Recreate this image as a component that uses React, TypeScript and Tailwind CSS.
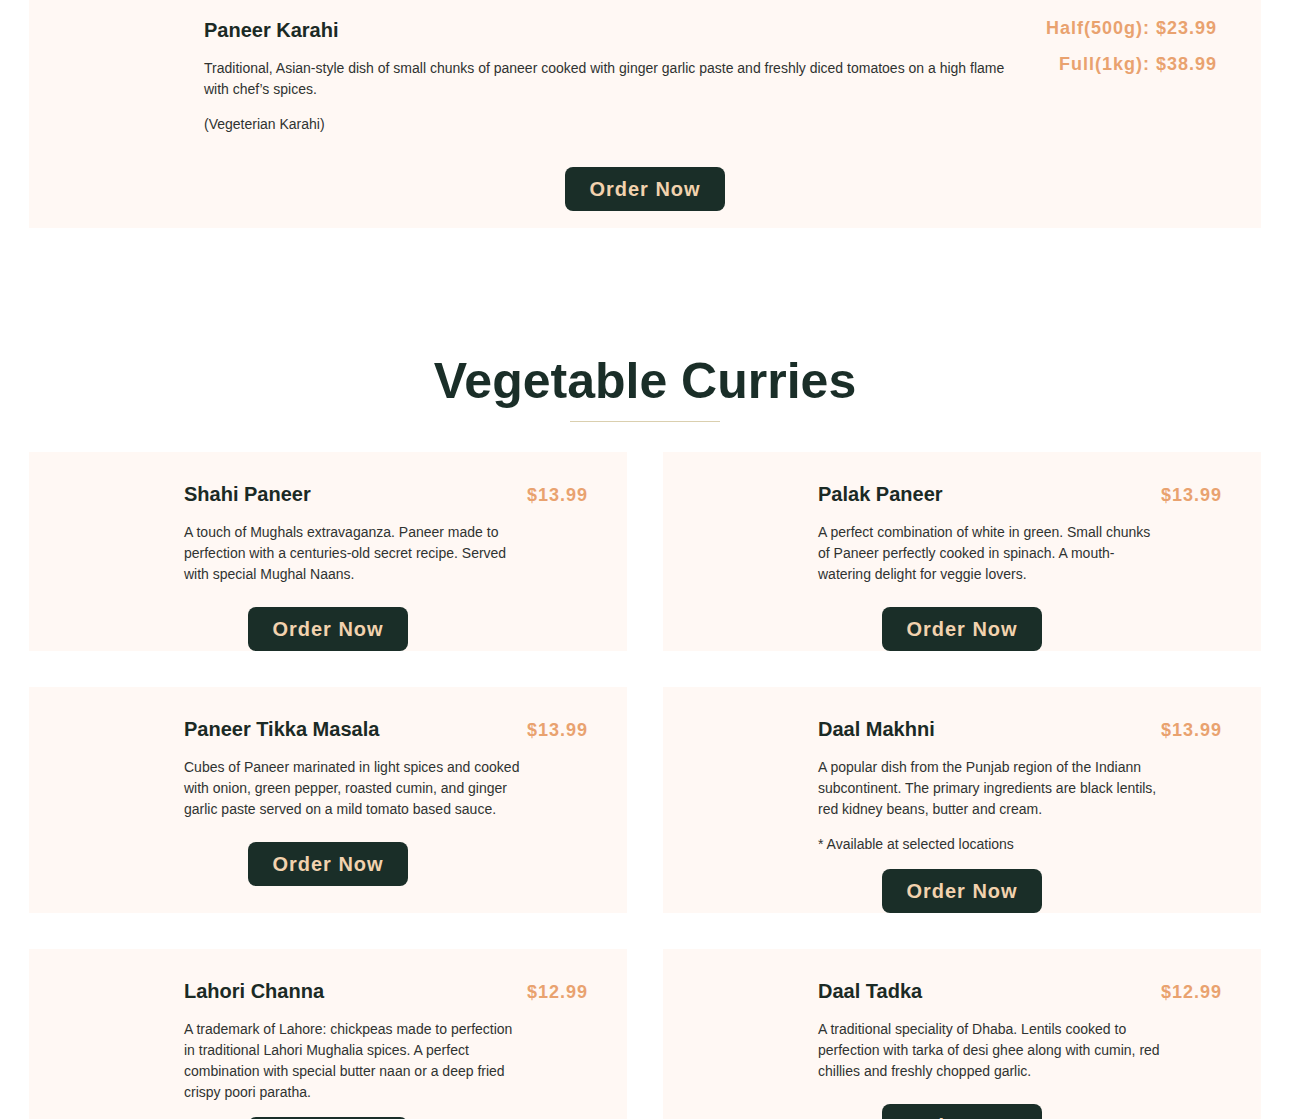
import React from "react";

type Item = { name: string; price: string; desc: string[] };

const items: Item[] = [
  {
    name: "Shahi Paneer",
    price: "$13.99",
    desc: [
      "A touch of Mughals extravaganza. Paneer made to perfection with a centuries-old secret recipe. Served with special Mughal Naans.",
    ],
  },
  {
    name: "Palak Paneer",
    price: "$13.99",
    desc: [
      "A perfect combination of white in green. Small chunks of Paneer perfectly cooked in spinach. A mouth-watering delight for veggie lovers.",
    ],
  },
  {
    name: "Paneer Tikka Masala",
    price: "$13.99",
    desc: [
      "Cubes of Paneer marinated in light spices and cooked with onion, green pepper, roasted cumin, and ginger garlic paste served on a mild tomato based sauce.",
    ],
  },
  {
    name: "Daal Makhni",
    price: "$13.99",
    desc: [
      "A popular dish from the Punjab region of the Indiann subcontinent. The primary ingredients are black lentils, red kidney beans, butter and cream.",
      "* Available at selected locations",
    ],
  },
  {
    name: "Lahori Channa",
    price: "$12.99",
    desc: [
      "A trademark of Lahore: chickpeas made to perfection in traditional Lahori Mughalia spices. A perfect combination with special butter naan or a deep fried crispy poori paratha.",
    ],
  },
  {
    name: "Daal Tadka",
    price: "$12.99",
    desc: [
      "A traditional speciality of Dhaba. Lentils cooked to perfection with tarka of desi ghee along with cumin, red chillies and freshly chopped garlic.",
    ],
  },
];

function OrderButton() {
  return (
    <button className="flex h-[44px] w-[160px] items-center justify-center rounded-[8px] bg-[#1a2e28] text-[20px] font-bold leading-none tracking-[1px] text-[#f2d2ae]">
      Order Now
    </button>
  );
}

function Card({ item }: { item: Item }) {
  return (
    <div className="bg-[#fff8f4] pl-[155px] pr-[39px] pt-[28px]">
      <div className="flex h-[28px] items-center justify-between">
        <h3 className="text-[20px] font-bold leading-[28px] text-[#1b2a25]">{item.name}</h3>
        <span className="mt-[2px] text-[18px] font-bold leading-[26px] tracking-[1px] text-[#e9a26f]">
          {item.price}
        </span>
      </div>
      <div className="mb-[14px] mt-[14px] flex min-h-[71px] w-[342.5px] flex-col gap-[14px]">
        {item.desc.map((d, i) => (
          <p key={i} className="text-[14px] leading-[21px] text-[#2f3331]">
            {d}
          </p>
        ))}
      </div>
      <div className="ml-[64px]">
        <OrderButton />
      </div>
    </div>
  );
}

export default function App() {
  return (
    <div
      className="min-h-[1119px] w-[1310px] bg-white"
      style={{ fontFamily: '"Liberation Sans", Arial, sans-serif' }}
    >
      {/* Top card */}
      <div className="ml-[29px] w-[1232px] bg-[#fff8f4] pb-[17px]">
        <div className="flex">
          <div className="w-[175px] shrink-0" />
          <div className="w-[820px] shrink-0 pt-[16px]">
            <h3 className="text-[20px] font-bold leading-[28px] text-[#1b2a25]">Paneer Karahi</h3>
            <div className="mt-[14px] flex flex-col gap-[14px]">
              <p className="text-[14px] leading-[21px] text-[#2f3331]">
                Traditional, Asian-style dish of small chunks of paneer cooked with ginger garlic paste and freshly diced tomatoes on a high flame with chef’s spices.
              </p>
              <p className="text-[14px] leading-[21px] text-[#2f3331]">(Vegeterian Karahi)</p>
            </div>
          </div>
          <div className="flex flex-1 flex-col items-end gap-[10px] pr-[44px] pt-[15px]">
            <span className="text-[18px] font-bold leading-[26px] tracking-[1px] text-[#e9a26f]">
              Half(500g): $23.99
            </span>
            <span className="text-[18px] font-bold leading-[26px] tracking-[1px] text-[#e9a26f]">
              Full(1kg): $38.99
            </span>
          </div>
        </div>
        <div className="mt-[32px] flex justify-center">
          <OrderButton />
        </div>
      </div>

      {/* Section heading */}
      <div className="ml-[29px] flex w-[1232px] flex-col items-center pt-[123px]">
        <h2 className="text-[50px] font-bold leading-[60px] text-[#1a2e28]">Vegetable Curries</h2>
        <div className="mt-[10px] h-[1px] w-[150px] bg-[#dacfae]" />
      </div>

      {/* Grid */}
      <div className="ml-[29px] mt-[30px] grid w-[1232px] grid-cols-2 gap-x-[36px] gap-y-[36px]">
        {items.map((it) => (
          <Card key={it.name} item={it} />
        ))}
      </div>
    </div>
  );
}
